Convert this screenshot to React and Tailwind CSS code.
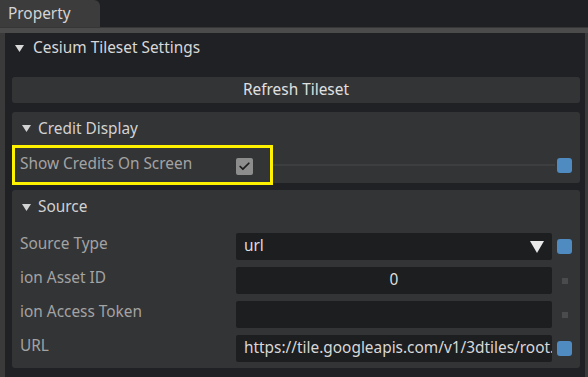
import { Check } from 'lucide-react'

const Caret = ({ className = '' }) => (
  <svg className={className} width="9" height="7" viewBox="0 0 9 7">
    <path d="M0 0h9L4.5 7z" fill="currentColor" />
  </svg>
)

const BlueBox = () => <div className="w-[15px] h-[15px] rounded-[3px] bg-[#4f8ac0]" />

const GreyDot = () => (
  <div className="w-[15px] h-[15px] flex items-center justify-center">
    <div className="w-[6px] h-[6px] bg-[#4a4b4c]" />
  </div>
)

function Field({ label, children, marker }) {
  return (
    <div className="flex items-center h-[27px]">
      <div className="w-[224px] pl-[8px] text-[#a3a3a3] -mt-[6px]">{label}</div>
      <div className="w-[316px] h-[27px] bg-[#1d1e20] rounded-[2px] flex items-center overflow-hidden">
        {children}
      </div>
      <div className="ml-[5px]">{marker}</div>
    </div>
  )
}

export default function App() {
  return (
    <div
      className="w-[588px] h-[377px] bg-[#202124] overflow-hidden flex flex-col text-[15.4px] leading-none"
      style={{ fontFamily: '"Noto Sans", "Open Sans", sans-serif' }}
    >
      {/* Tab bar */}
      <div className="h-[27px] flex shrink-0 bg-[#1f2023]">
        <div className="w-[100px] bg-[#3c3c3c] rounded-tr-[6px] pl-[8px] flex items-center text-[#d4d4d4]">
          Property
        </div>
      </div>
      <div className="h-[6px] shrink-0 bg-[#4b4b4b] border-t border-[#363636]" />

      {/* Body */}
      <div className="flex-1 flex">
        <div className="w-[5px] bg-[#3a3a3a]" />
        <div className="flex-1 pl-[7px] pr-[5px]">
          <div className="h-[30px] flex items-center text-[#d8d8d8]">
            <Caret className="ml-[3px] mr-[9px]" />
            <span>Cesium Tileset Settings</span>
          </div>

          <div className="mt-[14px] h-[26px] bg-[#333436] rounded-[3px] flex items-center justify-center text-[#e0e0e0]">
            Refresh Tileset
          </div>

          {/* Credit Display */}
          <div className="relative mt-[9px] h-[71px] bg-[#333436] rounded-[3px]">
            <div className="h-[33px] flex items-center text-[#d2d2d2]">
              <Caret className="ml-[10px] mr-[7px]" />
              <span>Credit Display</span>
            </div>
            <div className="h-[38px] flex items-center">
              <div className="w-[224px] pl-[8px] text-[#a3a3a3]">Show Credits On Screen</div>
              <div className="w-[17px] h-[17px] rounded-[2px] bg-[#8d8d8d] flex items-center justify-center mt-[5px]">
                <Check size={13} strokeWidth={3.2} color="#1c1c1c" />
              </div>
              <div className="ml-[20px] w-[282px] h-[2px] bg-[#3d3e40] mt-[2px]" />
              <div className="ml-[2px] mt-[3px]">
                <BlueBox />
              </div>
            </div>
            <div className="absolute left-0 top-[33px] w-[261px] h-[40px] border-[3px] border-[#fff200]" />
          </div>

          {/* Source */}
          <div className="mt-[7px] h-[178px] bg-[#333436] rounded-[3px]">
            <div className="h-[34px] flex items-center text-[#d2d2d2]">
              <Caret className="ml-[10px] mr-[7px]" />
              <span>Source</span>
            </div>
            <div className="flex flex-col gap-[7px] mt-[9px]">
              <Field label="Source Type" marker={<BlueBox />}>
                <span className="pl-[8px] text-[#dedede] flex-1 -mt-[2px]">url</span>
                <svg className="mr-[8px]" width="14" height="12" viewBox="0 0 14 12">
                  <path d="M0 0h14L7 12z" fill="#e8e8e8" />
                </svg>
              </Field>
              <Field label="ion Asset ID" marker={<GreyDot />}>
                <span className="flex-1 text-center text-[#dedede] -mt-[2px]">0</span>
              </Field>
              <Field label="ion Access Token" marker={<GreyDot />} />
              <Field label="URL" marker={<BlueBox />}>
                <span className="pl-[8px] text-[#d8d8d8] whitespace-nowrap -mt-[2px]">
                  https://tile.googleapis.com/v1/3dtiles/root.json
                </span>
              </Field>
            </div>
          </div>
        </div>
        <div className="w-[3px] bg-[#3a3a3a]" />
      </div>
    </div>
  )
}
